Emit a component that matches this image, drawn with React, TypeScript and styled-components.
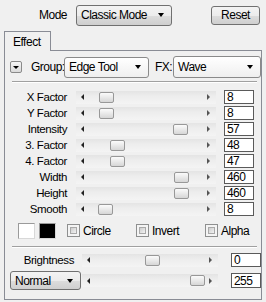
import React from "react";
import styled, { createGlobalStyle } from "styled-components";

const Global = createGlobalStyle`
  html, body { margin: 0; padding: 0; background: #f0f0f0; }
  body { font-family: "Liberation Sans", Arial, sans-serif; font-size: 11px; color: #000; }
`;

const Root = styled.div`
  width: 266px;
  height: 302px;
  overflow: hidden;
  background: #f0f0f0;
  letter-spacing: -0.3px;
`;

const TopBar = styled.div`
  height: 30px;
  display: flex;
  align-items: center;
  padding-right: 6px;
`;

const RightLabel = styled.div<{ $w: number; $big?: boolean }>`
  width: ${(p) => p.$w}px;
  text-align: right;
  white-space: nowrap;
  flex-shrink: 0;
  font-size: ${(p) => (p.$big ? 12 : 11.5)}px;
  letter-spacing: ${(p) => (p.$big ? -0.5 : -0.4)}px;
`;

const Combo = styled.div<{ $w: number; $h: number; $light?: boolean; $ml?: number }>`
  box-sizing: border-box;
  width: ${(p) => p.$w}px;
  height: ${(p) => p.$h}px;
  margin-left: ${(p) => p.$ml ?? 0}px;
  flex-shrink: 0;
  border: 1px solid ${(p) => (p.$light ? "#8a8a8a" : "#707070")};
  border-radius: 3px;
  background: ${(p) =>
    p.$light
      ? "linear-gradient(#ffffff, #f7f7f7 50%, #efefef)"
      : "linear-gradient(#f3f3f3, #ececec 50%, #dddddd 51%, #cfcfcf)"};
  display: flex;
  align-items: center;
  padding: 0 7px 0 4px;
  white-space: nowrap;
`;

const ComboText = styled.span`
  flex: 1;
  font-size: 12px;
  letter-spacing: -0.5px;
`;

const DownArrow = styled.span`
  width: 0;
  height: 0;
  border-left: 3.5px solid transparent;
  border-right: 3.5px solid transparent;
  border-top: 4px solid #000;
`;

const Button = styled.div`
  box-sizing: border-box;
  margin-left: auto;
  width: 49px;
  height: 19px;
  border: 1px solid #707070;
  border-radius: 3px;
  background: linear-gradient(#f3f3f3, #ececec 50%, #dddddd 51%, #cfcfcf);
  display: flex;
  align-items: center;
  justify-content: center;
  font-size: 12px;
  letter-spacing: -0.5px;
`;

const TabStrip = styled.div`
  height: 20px;
  padding: 1px 0 0 4px;
  box-sizing: border-box;
  display: flex;
`;

const Tab = styled.div`
  position: relative;
  z-index: 1;
  box-sizing: border-box;
  width: 47px;
  height: 20px;
  border: 1px solid #898c95;
  border-bottom: none;
  background: #f0f0f0;
  padding: 3px 0 0 8px;
  font-size: 12px;
  letter-spacing: -0.5px;
`;

const Panel = styled.div`
  box-sizing: border-box;
  margin-left: 4px;
  width: 258px;
  height: 250px;
  border: 1px solid #898c95;
  background: #f0f0f0;
`;

const GroupRow = styled.div`
  margin-top: 5px;
  height: 22px;
  display: flex;
  align-items: center;
  padding-left: 5px;
`;

const MiniButton = styled.div`
  box-sizing: border-box;
  width: 12px;
  height: 12px;
  border: 1px solid #8a8a8a;
  border-radius: 2px;
  background: linear-gradient(#f6f6f6, #dadada);
  display: flex;
  align-items: center;
  justify-content: center;
  margin-right: 9px;
`;

const MiniArrow = styled.span`
  width: 0;
  height: 0;
  border-left: 3px solid transparent;
  border-right: 3px solid transparent;
  border-top: 3px solid #000;
`;

const InlineLabel = styled.div<{ $w: number; $ml?: number }>`
  width: ${(p) => p.$w}px;
  margin-left: ${(p) => p.$ml ?? 0}px;
  flex-shrink: 0;
  font-size: 12px;
  letter-spacing: -0.5px;
`;

const Separator = styled.div<{ $mt: number }>`
  margin: ${(p) => p.$mt}px 4px 0 7px;
  height: 1px;
  background: #a0a0a0;
  border-bottom: 1px solid #ffffff;
`;

const SliderList = styled.div`
  margin-top: 6px;
  display: flex;
  flex-direction: column;
`;

const SliderRow = styled.div`
  height: 16px;
  display: flex;
  align-items: center;
`;

const Track = styled.div<{ $w: number; $ml: number }>`
  position: relative;
  box-sizing: border-box;
  width: ${(p) => p.$w}px;
  margin-left: ${(p) => p.$ml}px;
  height: 13px;
  flex-shrink: 0;
  background: linear-gradient(#e4e4e4, #ededed 40%, #f4f4f4);
  display: flex;
  align-items: center;
  justify-content: space-between;
  padding: 0 6px 0 5px;
`;

const LeftArrow = styled.span`
  width: 0;
  height: 0;
  border-top: 3px solid transparent;
  border-bottom: 3px solid transparent;
  border-right: 3px solid #222;
`;

const RightArrow = styled.span`
  width: 0;
  height: 0;
  border-top: 3px solid transparent;
  border-bottom: 3px solid transparent;
  border-left: 3px solid #555;
`;

const Thumb = styled.div`
  position: absolute;
  top: 1px;
  box-sizing: border-box;
  width: 15px;
  height: 11px;
  border: 1px solid #989898;
  border-radius: 2px;
  background: linear-gradient(#fbfbfb, #e9e9e9 50%, #d6d6d6);
`;

const ValueBox = styled.div<{ $ml: number; $h?: number }>`
  box-sizing: border-box;
  width: 30px;
  height: ${(p) => p.$h ?? 14}px;
  margin-left: ${(p) => p.$ml}px;
  flex-shrink: 0;
  border: 1px solid #5a5a5a;
  background: #fff;
  padding-left: 2px;
  display: flex;
  align-items: center;
  font-size: 12px;
  letter-spacing: -0.6px;
`;

const ColorRow = styled.div`
  margin-top: 5px;
  height: 17px;
  display: flex;
  align-items: center;
  padding-left: 13px;
`;

const Swatch = styled.div<{ $color: string; $ml?: number }>`
  box-sizing: border-box;
  width: 17px;
  height: 16px;
  margin-left: ${(p) => p.$ml ?? 0}px;
  background: ${(p) => p.$color};
  border: 1px solid #9a9a9a;
  border-right-color: #d8d8d8;
  border-bottom-color: #d8d8d8;
`;

const CheckItem = styled.div<{ $w?: number; $ml?: number }>`
  width: ${(p) => (p.$w ? `${p.$w}px` : "auto")};
  margin-left: ${(p) => p.$ml ?? 0}px;
  display: flex;
  align-items: center;
  gap: 3px;
  font-size: 12px;
  letter-spacing: -0.5px;
`;

const CheckBox = styled.span`
  position: relative;
  box-sizing: border-box;
  width: 13px;
  height: 13px;
  border: 1px solid #8e8f8f;
  background: #f4f4f4;
  &::after {
    content: "";
    position: absolute;
    left: 2px;
    top: 2px;
    width: 7px;
    height: 7px;
    border: 1px solid #a9a9a9;
    background: linear-gradient(135deg, #cdcdcd, #f2f2f2);
    box-sizing: border-box;
  }
`;

const BottomRow = styled.div<{ $mt: number; $h: number; $pl?: number }>`
  margin-top: ${(p) => p.$mt}px;
  height: ${(p) => p.$h}px;
  padding-left: ${(p) => p.$pl ?? 0}px;
  display: flex;
  align-items: center;
`;

type SliderDef = { label: string; pos: number; value: string };

const sliders: SliderDef[] = [
  { label: "X Factor", pos: 23, value: "8" },
  { label: "Y Factor", pos: 23, value: "8" },
  { label: "Intensity", pos: 97, value: "57" },
  { label: "3. Factor", pos: 34, value: "48" },
  { label: "4. Factor", pos: 34, value: "47" },
  { label: "Width", pos: 98, value: "460" },
  { label: "Height", pos: 98, value: "460" },
  { label: "Smooth", pos: 22, value: "8" },
];

const Slider: React.FC<{ w: number; ml: number; pos: number }> = ({ w, ml, pos }) => (
  <Track $w={w} $ml={ml}>
    <LeftArrow />
    <RightArrow />
    <Thumb style={{ left: pos }} />
  </Track>
);

export default function App() {
  return (
    <Root>
      <Global />
      <TopBar>
        <RightLabel $w={67} $big>Mode</RightLabel>
        <Combo $w={96} $h={21} $ml={9}>
          <ComboText>Classic Mode</ComboText>
          <DownArrow />
        </Combo>
        <Button>Reset</Button>
      </TopBar>
      <TabStrip>
        <Tab>Effect</Tab>
      </TabStrip>
      <Panel>
        <GroupRow>
          <MiniButton>
            <MiniArrow />
          </MiniButton>
          <InlineLabel $w={33}>Group:</InlineLabel>
          <Combo $w={85} $h={21} $light>
            <ComboText>Edge Tool</ComboText>
            <DownArrow />
          </Combo>
          <InlineLabel $w={18} $ml={6}>FX:</InlineLabel>
          <Combo $w={88} $h={22} $light>
            <ComboText>Wave</ComboText>
            <DownArrow />
          </Combo>
        </GroupRow>
        <Separator $mt={3} />
        <SliderList>
          {sliders.map((s) => (
            <SliderRow key={s.label}>
              <RightLabel $w={62}>{s.label}</RightLabel>
              <Slider w={140} ml={9} pos={s.pos} />
              <ValueBox $ml={8}>{s.value}</ValueBox>
            </SliderRow>
          ))}
        </SliderList>
        <ColorRow>
          <Swatch $color="#ffffff" />
          <Swatch $color="#000000" $ml={4} />
          <CheckItem $w={69} $ml={11}>
            <CheckBox />
            Circle
          </CheckItem>
          <CheckItem $w={69}>
            <CheckBox />
            Invert
          </CheckItem>
          <CheckItem>
            <CheckBox />
            Alpha
          </CheckItem>
        </ColorRow>
        <Separator $mt={7} />
        <BottomRow $mt={4} $h={16}>
          <RightLabel $w={69}>Brightness</RightLabel>
          <Slider w={136} ml={8} pos={63} />
          <ValueBox $ml={13}>0</ValueBox>
        </BottomRow>
        <BottomRow $mt={2} $h={21} $pl={5}>
          <Combo $w={71} $h={19}>
            <ComboText>Normal</ComboText>
            <DownArrow />
          </Combo>
          <Slider w={136} ml={1} pos={108} />
          <ValueBox $ml={13} $h={15}>255</ValueBox>
        </BottomRow>
      </Panel>
    </Root>
  );
}
